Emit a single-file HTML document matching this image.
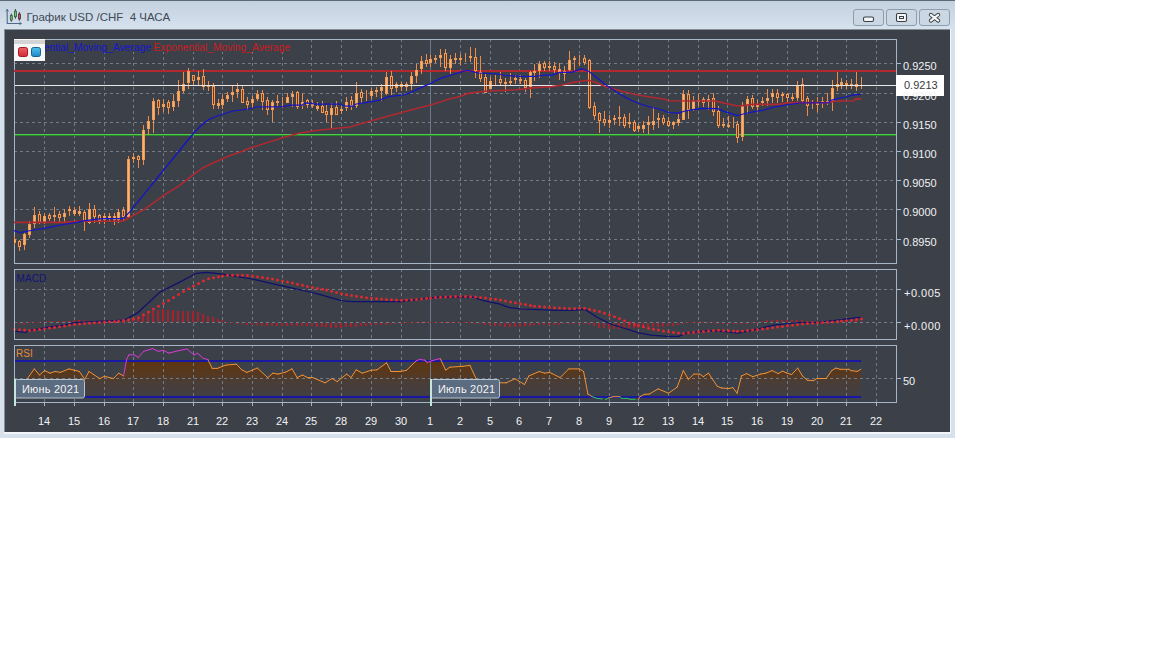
<!DOCTYPE html>
<html><head><meta charset="utf-8"><style>
*{margin:0;padding:0;box-sizing:border-box}
html,body{width:1152px;height:648px;overflow:hidden;background:#fff;font-family:"Liberation Sans",sans-serif}
#win{position:absolute;left:0;top:0;width:955px;height:438px;background:#d6e1ec}
#topline{position:absolute;left:0;top:0;width:955px;height:1px;background:#5f6973}
#title{position:absolute;left:0;top:1px;width:955px;height:28px;background:linear-gradient(#c4d1de,#d6e2ee)}
#shadow{position:absolute;left:4px;top:29px;width:947px;height:405px;background:#f2f6fa}
#shadow2{position:absolute;left:4px;top:29px;width:946px;height:403px;background:#868d94}
#frame{position:absolute;left:5px;top:30px;width:945px;height:402px;background:#3b4049}
#ttl{position:absolute;left:26.5px;top:11px;font-size:11.5px;color:#3e4a58;white-space:pre;line-height:13px}
svg{position:absolute;left:0;top:0}
.pl{position:absolute;left:903px;font-size:11px;color:#f2f2f2;line-height:13px;white-space:pre}
.tl{position:absolute;top:415px;width:40px;text-align:center;font-size:11px;color:#f2f2f2;line-height:13px}
.lg{position:absolute;top:42px;font-size:10px;line-height:12px;white-space:pre}
.cb{position:absolute;top:383px;font-size:11px;line-height:13px;color:#f4f4f4;white-space:pre;letter-spacing:0.2px}
</style></head><body>
<div id="win"><div id="topline"></div><div id="title"></div><div id="shadow"></div><div id="shadow2"></div><div id="frame"></div></div>
<div id="ttl">График USD /CHF  4 ЧАСА</div>
<svg style="left:5px;top:8px" width="18" height="18" viewBox="0 0 18 18" shape-rendering="geometricPrecision">
<path d="M2.2 1.8V15.5H16" fill="none" stroke="#4e6a88" stroke-width="1.1"/>
<path d="M0.9 3.4L2.2 1.2L3.5 3.4M14.4 14.2L16.6 15.5L14.4 16.8" fill="none" stroke="#4e6a88" stroke-width="0.9"/>
<path d="M6.3 5.6V13.8M10.4 1V10.8M14.4 4V12.8" stroke="#333" stroke-width="0.9"/>
<rect x="5.3" y="7.6" width="2" height="4.4" fill="#78c078" stroke="#2a5a30" stroke-width="0.8"/>
<rect x="9.4" y="3.1" width="2" height="5.6" fill="#78c078" stroke="#2a5a30" stroke-width="0.8"/>
<rect x="13.4" y="6.1" width="2" height="4.8" fill="#b06070" stroke="#5a2030" stroke-width="0.8"/>
</svg>
<svg style="left:850px;top:6px" width="104" height="24" viewBox="850 6 104 24" shape-rendering="geometricPrecision">
<rect x="853.5" y="9.5" width="30" height="16" rx="2.5" fill="#cbd8e4" stroke="#8e9cab"/>
<rect x="886.5" y="9.5" width="30" height="16" rx="2.5" fill="#cbd8e4" stroke="#8e9cab"/>
<rect x="919.5" y="9.5" width="30" height="16" rx="2.5" fill="#cbd8e4" stroke="#8e9cab"/>
<rect x="863.5" y="17" width="10" height="4.5" rx="1.5" fill="#f4f6f8" stroke="#3a3f46" stroke-width="1.1"/>
<rect x="896.5" y="13.5" width="10" height="8" rx="1.2" fill="#f4f6f8" stroke="#3a3f46" stroke-width="1.1"/>
<rect x="899.5" y="16.5" width="4" height="2" fill="none" stroke="#3a3f46" stroke-width="1"/>
<path d="M930.8 14.8L938.2 20.6M938.2 14.8L930.8 20.6" stroke="#3a3f46" stroke-width="4" stroke-linecap="round"/>
<path d="M930.8 14.8L938.2 20.6M938.2 14.8L930.8 20.6" stroke="#f4f6f8" stroke-width="2.1" stroke-linecap="round"/>
</svg>
<svg width="1152" height="648" viewBox="0 0 1152 648" shape-rendering="crispEdges">
<defs>
<linearGradient id="rsig" gradientUnits="userSpaceOnUse" x1="0" y1="361" x2="0" y2="398">
<stop offset="0" stop-color="#5c3510"/><stop offset="0.4" stop-color="#553923"/><stop offset="0.55" stop-color="#4a3d36"/><stop offset="1" stop-color="#403f45"/></linearGradient>
<clipPath id="rsiIn"><rect x="14" y="361" width="882" height="36"/></clipPath>
<clipPath id="rsiHi"><rect x="14" y="340" width="882" height="21"/></clipPath>
<clipPath id="rsiLo"><rect x="14" y="397" width="882" height="10"/></clipPath>
<clipPath id="mainc"><rect x="14" y="40" width="882" height="223"/></clipPath>
</defs><polygon points="27.4,397.0 27.4,378.5 34.3,368.9 39.5,375.0 44.7,370.6 49.9,373.2 55.1,371.5 60.3,372.4 69.0,368.9 79.4,371.5 84.7,379.3 89.0,371.5 99.8,378.6 104.3,376.3 113.3,378.6 118.6,373.2 123.6,375.9 126.7,361.0 128.9,361.0 133.9,361.0 138.3,361.0 143.7,361.0 152.7,361.0 158.0,361.0 163.4,361.0 168.8,361.0 178.4,361.0 187.0,361.0 194.0,361.0 197.5,361.0 203.5,361.0 207.8,361.0 212.2,368.4 217.4,368.4 222.6,366.3 226.0,365.1 236.5,364.2 241.7,369.8 246.9,372.4 257.3,368.0 267.7,377.6 272.9,373.2 278.0,374.1 285.0,372.4 292.0,368.9 297.2,377.6 302.4,375.0 307.6,377.6 312.8,377.6 325.0,382.8 332.0,378.5 337.2,381.6 346.7,374.1 351.0,377.6 356.2,369.8 362.3,373.2 371.0,370.3 377.0,369.8 386.6,362.8 391.0,371.5 400.4,371.5 406.5,370.3 416.0,361.1 419.5,361.0 424.7,361.0 427.3,362.5 431.7,361.0 436.9,361.0 440.3,361.0 445.6,370.1 449.9,367.2 462.9,366.3 469.9,365.4 476.0,378.5 478.0,382.0 499.4,382.8 506.3,382.8 515.0,378.8 524.5,384.5 528.9,375.9 539.3,371.5 544.5,373.2 549.7,372.4 560.1,377.6 568.8,368.9 579.2,368.9 583.6,371.5 587.9,394.0 592.2,396.7 597.4,397.0 606.0,397.0 608.6,397.0 613.0,396.7 620.0,396.7 621.7,397.0 626.9,397.0 630.3,397.0 638.2,397.0 639.9,396.7 644.2,394.4 649.4,394.0 658.1,388.9 668.5,393.2 677.2,387.1 683.3,370.6 688.5,379.3 693.7,374.1 699.8,374.1 703.3,376.7 708.5,373.2 717.2,386.3 721.5,388.0 729.3,388.5 732.8,387.5 737.1,393.2 741.5,375.9 746.7,373.6 752.7,376.7 760.6,374.1 765.8,373.2 772.2,370.6 778.2,373.6 782.5,371.2 786.7,373.0 791.6,374.6 797.7,368.1 802.5,376.0 807.4,380.3 813.5,380.6 817.1,378.5 826.2,378.5 831.7,370.6 835.9,368.1 840.2,369.3 848.7,369.3 851.1,370.6 857.2,371.4 860.9,369.3 860.9,397.0" fill="url(#rsig)" shape-rendering="geometricPrecision"/><line x1="14" y1="63.5" x2="896" y2="63.5" stroke="#737b86" stroke-width="1" stroke-dasharray="3 3"/><line x1="14" y1="93.5" x2="896" y2="93.5" stroke="#737b86" stroke-width="1" stroke-dasharray="3 3"/><line x1="14" y1="122.5" x2="896" y2="122.5" stroke="#737b86" stroke-width="1" stroke-dasharray="3 3"/><line x1="14" y1="151.5" x2="896" y2="151.5" stroke="#737b86" stroke-width="1" stroke-dasharray="3 3"/><line x1="14" y1="180.5" x2="896" y2="180.5" stroke="#737b86" stroke-width="1" stroke-dasharray="3 3"/><line x1="14" y1="209.5" x2="896" y2="209.5" stroke="#737b86" stroke-width="1" stroke-dasharray="3 3"/><line x1="14" y1="239.5" x2="896" y2="239.5" stroke="#737b86" stroke-width="1" stroke-dasharray="3 3"/><line x1="14" y1="289.5" x2="896" y2="289.5" stroke="#737b86" stroke-width="1" stroke-dasharray="3 3"/><line x1="14" y1="322.5" x2="896" y2="322.5" stroke="#737b86" stroke-width="1" stroke-dasharray="3 3"/><line x1="14" y1="378.5" x2="896" y2="378.5" stroke="#737b86" stroke-width="1" stroke-dasharray="3 3"/><line x1="44.5" y1="39" x2="44.5" y2="263" stroke="#737b86" stroke-width="1" stroke-dasharray="3 3"/><line x1="44.5" y1="269" x2="44.5" y2="339" stroke="#737b86" stroke-width="1" stroke-dasharray="3 3"/><line x1="44.5" y1="345" x2="44.5" y2="402" stroke="#737b86" stroke-width="1" stroke-dasharray="3 3"/><line x1="74.5" y1="39" x2="74.5" y2="263" stroke="#737b86" stroke-width="1" stroke-dasharray="3 3"/><line x1="74.5" y1="269" x2="74.5" y2="339" stroke="#737b86" stroke-width="1" stroke-dasharray="3 3"/><line x1="74.5" y1="345" x2="74.5" y2="402" stroke="#737b86" stroke-width="1" stroke-dasharray="3 3"/><line x1="104.5" y1="39" x2="104.5" y2="263" stroke="#737b86" stroke-width="1" stroke-dasharray="3 3"/><line x1="104.5" y1="269" x2="104.5" y2="339" stroke="#737b86" stroke-width="1" stroke-dasharray="3 3"/><line x1="104.5" y1="345" x2="104.5" y2="402" stroke="#737b86" stroke-width="1" stroke-dasharray="3 3"/><line x1="133.5" y1="39" x2="133.5" y2="263" stroke="#737b86" stroke-width="1" stroke-dasharray="3 3"/><line x1="133.5" y1="269" x2="133.5" y2="339" stroke="#737b86" stroke-width="1" stroke-dasharray="3 3"/><line x1="133.5" y1="345" x2="133.5" y2="402" stroke="#737b86" stroke-width="1" stroke-dasharray="3 3"/><line x1="163.5" y1="39" x2="163.5" y2="263" stroke="#737b86" stroke-width="1" stroke-dasharray="3 3"/><line x1="163.5" y1="269" x2="163.5" y2="339" stroke="#737b86" stroke-width="1" stroke-dasharray="3 3"/><line x1="163.5" y1="345" x2="163.5" y2="402" stroke="#737b86" stroke-width="1" stroke-dasharray="3 3"/><line x1="193.5" y1="39" x2="193.5" y2="263" stroke="#737b86" stroke-width="1" stroke-dasharray="3 3"/><line x1="193.5" y1="269" x2="193.5" y2="339" stroke="#737b86" stroke-width="1" stroke-dasharray="3 3"/><line x1="193.5" y1="345" x2="193.5" y2="402" stroke="#737b86" stroke-width="1" stroke-dasharray="3 3"/><line x1="222.5" y1="39" x2="222.5" y2="263" stroke="#737b86" stroke-width="1" stroke-dasharray="3 3"/><line x1="222.5" y1="269" x2="222.5" y2="339" stroke="#737b86" stroke-width="1" stroke-dasharray="3 3"/><line x1="222.5" y1="345" x2="222.5" y2="402" stroke="#737b86" stroke-width="1" stroke-dasharray="3 3"/><line x1="252.5" y1="39" x2="252.5" y2="263" stroke="#737b86" stroke-width="1" stroke-dasharray="3 3"/><line x1="252.5" y1="269" x2="252.5" y2="339" stroke="#737b86" stroke-width="1" stroke-dasharray="3 3"/><line x1="252.5" y1="345" x2="252.5" y2="402" stroke="#737b86" stroke-width="1" stroke-dasharray="3 3"/><line x1="282.5" y1="39" x2="282.5" y2="263" stroke="#737b86" stroke-width="1" stroke-dasharray="3 3"/><line x1="282.5" y1="269" x2="282.5" y2="339" stroke="#737b86" stroke-width="1" stroke-dasharray="3 3"/><line x1="282.5" y1="345" x2="282.5" y2="402" stroke="#737b86" stroke-width="1" stroke-dasharray="3 3"/><line x1="311.5" y1="39" x2="311.5" y2="263" stroke="#737b86" stroke-width="1" stroke-dasharray="3 3"/><line x1="311.5" y1="269" x2="311.5" y2="339" stroke="#737b86" stroke-width="1" stroke-dasharray="3 3"/><line x1="311.5" y1="345" x2="311.5" y2="402" stroke="#737b86" stroke-width="1" stroke-dasharray="3 3"/><line x1="341.5" y1="39" x2="341.5" y2="263" stroke="#737b86" stroke-width="1" stroke-dasharray="3 3"/><line x1="341.5" y1="269" x2="341.5" y2="339" stroke="#737b86" stroke-width="1" stroke-dasharray="3 3"/><line x1="341.5" y1="345" x2="341.5" y2="402" stroke="#737b86" stroke-width="1" stroke-dasharray="3 3"/><line x1="371.5" y1="39" x2="371.5" y2="263" stroke="#737b86" stroke-width="1" stroke-dasharray="3 3"/><line x1="371.5" y1="269" x2="371.5" y2="339" stroke="#737b86" stroke-width="1" stroke-dasharray="3 3"/><line x1="371.5" y1="345" x2="371.5" y2="402" stroke="#737b86" stroke-width="1" stroke-dasharray="3 3"/><line x1="401.5" y1="39" x2="401.5" y2="263" stroke="#737b86" stroke-width="1" stroke-dasharray="3 3"/><line x1="401.5" y1="269" x2="401.5" y2="339" stroke="#737b86" stroke-width="1" stroke-dasharray="3 3"/><line x1="401.5" y1="345" x2="401.5" y2="402" stroke="#737b86" stroke-width="1" stroke-dasharray="3 3"/><line x1="460.5" y1="39" x2="460.5" y2="263" stroke="#737b86" stroke-width="1" stroke-dasharray="3 3"/><line x1="460.5" y1="269" x2="460.5" y2="339" stroke="#737b86" stroke-width="1" stroke-dasharray="3 3"/><line x1="460.5" y1="345" x2="460.5" y2="402" stroke="#737b86" stroke-width="1" stroke-dasharray="3 3"/><line x1="490.5" y1="39" x2="490.5" y2="263" stroke="#737b86" stroke-width="1" stroke-dasharray="3 3"/><line x1="490.5" y1="269" x2="490.5" y2="339" stroke="#737b86" stroke-width="1" stroke-dasharray="3 3"/><line x1="490.5" y1="345" x2="490.5" y2="402" stroke="#737b86" stroke-width="1" stroke-dasharray="3 3"/><line x1="519.5" y1="39" x2="519.5" y2="263" stroke="#737b86" stroke-width="1" stroke-dasharray="3 3"/><line x1="519.5" y1="269" x2="519.5" y2="339" stroke="#737b86" stroke-width="1" stroke-dasharray="3 3"/><line x1="519.5" y1="345" x2="519.5" y2="402" stroke="#737b86" stroke-width="1" stroke-dasharray="3 3"/><line x1="549.5" y1="39" x2="549.5" y2="263" stroke="#737b86" stroke-width="1" stroke-dasharray="3 3"/><line x1="549.5" y1="269" x2="549.5" y2="339" stroke="#737b86" stroke-width="1" stroke-dasharray="3 3"/><line x1="549.5" y1="345" x2="549.5" y2="402" stroke="#737b86" stroke-width="1" stroke-dasharray="3 3"/><line x1="579.5" y1="39" x2="579.5" y2="263" stroke="#737b86" stroke-width="1" stroke-dasharray="3 3"/><line x1="579.5" y1="269" x2="579.5" y2="339" stroke="#737b86" stroke-width="1" stroke-dasharray="3 3"/><line x1="579.5" y1="345" x2="579.5" y2="402" stroke="#737b86" stroke-width="1" stroke-dasharray="3 3"/><line x1="609.5" y1="39" x2="609.5" y2="263" stroke="#737b86" stroke-width="1" stroke-dasharray="3 3"/><line x1="609.5" y1="269" x2="609.5" y2="339" stroke="#737b86" stroke-width="1" stroke-dasharray="3 3"/><line x1="609.5" y1="345" x2="609.5" y2="402" stroke="#737b86" stroke-width="1" stroke-dasharray="3 3"/><line x1="638.5" y1="39" x2="638.5" y2="263" stroke="#737b86" stroke-width="1" stroke-dasharray="3 3"/><line x1="638.5" y1="269" x2="638.5" y2="339" stroke="#737b86" stroke-width="1" stroke-dasharray="3 3"/><line x1="638.5" y1="345" x2="638.5" y2="402" stroke="#737b86" stroke-width="1" stroke-dasharray="3 3"/><line x1="668.5" y1="39" x2="668.5" y2="263" stroke="#737b86" stroke-width="1" stroke-dasharray="3 3"/><line x1="668.5" y1="269" x2="668.5" y2="339" stroke="#737b86" stroke-width="1" stroke-dasharray="3 3"/><line x1="668.5" y1="345" x2="668.5" y2="402" stroke="#737b86" stroke-width="1" stroke-dasharray="3 3"/><line x1="698.5" y1="39" x2="698.5" y2="263" stroke="#737b86" stroke-width="1" stroke-dasharray="3 3"/><line x1="698.5" y1="269" x2="698.5" y2="339" stroke="#737b86" stroke-width="1" stroke-dasharray="3 3"/><line x1="698.5" y1="345" x2="698.5" y2="402" stroke="#737b86" stroke-width="1" stroke-dasharray="3 3"/><line x1="727.5" y1="39" x2="727.5" y2="263" stroke="#737b86" stroke-width="1" stroke-dasharray="3 3"/><line x1="727.5" y1="269" x2="727.5" y2="339" stroke="#737b86" stroke-width="1" stroke-dasharray="3 3"/><line x1="727.5" y1="345" x2="727.5" y2="402" stroke="#737b86" stroke-width="1" stroke-dasharray="3 3"/><line x1="757.5" y1="39" x2="757.5" y2="263" stroke="#737b86" stroke-width="1" stroke-dasharray="3 3"/><line x1="757.5" y1="269" x2="757.5" y2="339" stroke="#737b86" stroke-width="1" stroke-dasharray="3 3"/><line x1="757.5" y1="345" x2="757.5" y2="402" stroke="#737b86" stroke-width="1" stroke-dasharray="3 3"/><line x1="787.5" y1="39" x2="787.5" y2="263" stroke="#737b86" stroke-width="1" stroke-dasharray="3 3"/><line x1="787.5" y1="269" x2="787.5" y2="339" stroke="#737b86" stroke-width="1" stroke-dasharray="3 3"/><line x1="787.5" y1="345" x2="787.5" y2="402" stroke="#737b86" stroke-width="1" stroke-dasharray="3 3"/><line x1="817.5" y1="39" x2="817.5" y2="263" stroke="#737b86" stroke-width="1" stroke-dasharray="3 3"/><line x1="817.5" y1="269" x2="817.5" y2="339" stroke="#737b86" stroke-width="1" stroke-dasharray="3 3"/><line x1="817.5" y1="345" x2="817.5" y2="402" stroke="#737b86" stroke-width="1" stroke-dasharray="3 3"/><line x1="846.5" y1="39" x2="846.5" y2="263" stroke="#737b86" stroke-width="1" stroke-dasharray="3 3"/><line x1="846.5" y1="269" x2="846.5" y2="339" stroke="#737b86" stroke-width="1" stroke-dasharray="3 3"/><line x1="846.5" y1="345" x2="846.5" y2="402" stroke="#737b86" stroke-width="1" stroke-dasharray="3 3"/><line x1="876.5" y1="39" x2="876.5" y2="263" stroke="#737b86" stroke-width="1" stroke-dasharray="3 3"/><line x1="876.5" y1="269" x2="876.5" y2="339" stroke="#737b86" stroke-width="1" stroke-dasharray="3 3"/><line x1="876.5" y1="345" x2="876.5" y2="402" stroke="#737b86" stroke-width="1" stroke-dasharray="3 3"/><line x1="430.5" y1="40" x2="430.5" y2="402" stroke="#6b7889" stroke-width="1"/><rect x="15" y="360" width="846" height="2" fill="#1818a4"/><rect x="15" y="396" width="846" height="2" fill="#1818a4"/><g fill="none" stroke-width="1" shape-rendering="geometricPrecision" stroke-linecap="round"><path d="M27.4 378.5L34.3 368.9M34.3 368.9L39.5 375.0M39.5 375.0L44.7 370.6M44.7 370.6L49.9 373.2M49.9 373.2L55.1 371.5M55.1 371.5L60.3 372.4M60.3 372.4L69.0 368.9M69.0 368.9L79.4 371.5M79.4 371.5L84.7 379.3M84.7 379.3L89.0 371.5M89.0 371.5L99.8 378.6M99.8 378.6L104.3 376.3M104.3 376.3L113.3 378.6M113.3 378.6L118.6 373.2M118.6 373.2L123.6 375.9M207.8 359.4L212.2 368.4M212.2 368.4L217.4 368.4M217.4 368.4L222.6 366.3M222.6 366.3L226.0 365.1M226.0 365.1L236.5 364.2M236.5 364.2L241.7 369.8M241.7 369.8L246.9 372.4M246.9 372.4L257.3 368.0M257.3 368.0L267.7 377.6M267.7 377.6L272.9 373.2M272.9 373.2L278.0 374.1M278.0 374.1L285.0 372.4M285.0 372.4L292.0 368.9M292.0 368.9L297.2 377.6M297.2 377.6L302.4 375.0M302.4 375.0L307.6 377.6M307.6 377.6L312.8 377.6M312.8 377.6L325.0 382.8M325.0 382.8L332.0 378.5M332.0 378.5L337.2 381.6M337.2 381.6L346.7 374.1M346.7 374.1L351.0 377.6M351.0 377.6L356.2 369.8M356.2 369.8L362.3 373.2M362.3 373.2L371.0 370.3M371.0 370.3L377.0 369.8M377.0 369.8L386.6 362.8M386.6 362.8L391.0 371.5M391.0 371.5L400.4 371.5M400.4 371.5L406.5 370.3M406.5 370.3L416.0 361.1M424.7 360.2L427.3 362.5M440.3 358.5L445.6 370.1M445.6 370.1L449.9 367.2M449.9 367.2L462.9 366.3M462.9 366.3L469.9 365.4M469.9 365.4L476.0 378.5M476.0 378.5L478.0 382.0M478.0 382.0L499.4 382.8M499.4 382.8L506.3 382.8M506.3 382.8L515.0 378.8M515.0 378.8L524.5 384.5M524.5 384.5L528.9 375.9M528.9 375.9L539.3 371.5M539.3 371.5L544.5 373.2M544.5 373.2L549.7 372.4M549.7 372.4L560.1 377.6M560.1 377.6L568.8 368.9M568.8 368.9L579.2 368.9M579.2 368.9L583.6 371.5M583.6 371.5L587.9 394.0M587.9 394.0L592.2 396.7M608.6 398.0L613.0 396.7M613.0 396.7L620.0 396.7M638.2 399.3L639.9 396.7M639.9 396.7L644.2 394.4M644.2 394.4L649.4 394.0M649.4 394.0L658.1 388.9M658.1 388.9L668.5 393.2M668.5 393.2L677.2 387.1M677.2 387.1L683.3 370.6M683.3 370.6L688.5 379.3M688.5 379.3L693.7 374.1M693.7 374.1L699.8 374.1M699.8 374.1L703.3 376.7M703.3 376.7L708.5 373.2M708.5 373.2L717.2 386.3M717.2 386.3L721.5 388.0M721.5 388.0L729.3 388.5M729.3 388.5L732.8 387.5M732.8 387.5L737.1 393.2M737.1 393.2L741.5 375.9M741.5 375.9L746.7 373.6M746.7 373.6L752.7 376.7M752.7 376.7L760.6 374.1M760.6 374.1L765.8 373.2M765.8 373.2L772.2 370.6M772.2 370.6L778.2 373.6M778.2 373.6L782.5 371.2M782.5 371.2L786.7 373.0M786.7 373.0L791.6 374.6M791.6 374.6L797.7 368.1M797.7 368.1L802.5 376.0M802.5 376.0L807.4 380.3M807.4 380.3L813.5 380.6M813.5 380.6L817.1 378.5M817.1 378.5L826.2 378.5M826.2 378.5L831.7 370.6M831.7 370.6L835.9 368.1M835.9 368.1L840.2 369.3M840.2 369.3L848.7 369.3M848.7 369.3L851.1 370.6M851.1 370.6L857.2 371.4M857.2 371.4L860.9 369.3" stroke="#f09236"/><path d="M123.6 375.9L126.7 359.3M126.7 359.3L128.9 354.8M128.9 354.8L133.9 354.8M133.9 354.8L138.3 357.5M138.3 357.5L143.7 351.3M143.7 351.3L152.7 348.6M152.7 348.6L158.0 351.3M158.0 351.3L163.4 350.4M163.4 350.4L168.8 353.1M168.8 353.1L178.4 350.7M178.4 350.7L187.0 348.9M187.0 348.9L194.0 355.0M194.0 355.0L197.5 353.3M197.5 353.3L203.5 358.5M203.5 358.5L207.8 359.4M416.0 361.1L419.5 359.4M419.5 359.4L424.7 360.2M427.3 362.5L431.7 360.8M431.7 360.8L436.9 359.4M436.9 359.4L440.3 358.5" stroke="#d83ad8"/><path d="M592.2 396.7L597.4 398.4M597.4 398.4L606.0 399.3M606.0 399.3L608.6 398.0M620.0 396.7L621.7 398.4M621.7 398.4L626.9 398.4M626.9 398.4L630.3 399.3M630.3 399.3L638.2 399.3" stroke="#30c060" stroke-dasharray="5 3"/></g><g fill="#a8222e"><rect x="13" y="323" width="2" height="1"/><rect x="18" y="323" width="2" height="1"/><rect x="23" y="323" width="2" height="2"/><rect x="28" y="322" width="2" height="1"/><rect x="33" y="322" width="2" height="1"/><rect x="38" y="322" width="2" height="1"/><rect x="43" y="321" width="2" height="1"/><rect x="48" y="321" width="2" height="1"/><rect x="53" y="321" width="2" height="1"/><rect x="58" y="321" width="2" height="1"/><rect x="63" y="321" width="2" height="1"/><rect x="68" y="321" width="2" height="1"/><rect x="73" y="320" width="2" height="2"/><rect x="78" y="320" width="2" height="2"/><rect x="83" y="320" width="2" height="2"/><rect x="88" y="321" width="2" height="1"/><rect x="93" y="321" width="2" height="1"/><rect x="98" y="321" width="2" height="1"/><rect x="103" y="321" width="2" height="1"/><rect x="108" y="321" width="2" height="1"/><rect x="113" y="321" width="2" height="1"/><rect x="117" y="321" width="2" height="1"/><rect x="122" y="322" width="2" height="1"/><rect x="127" y="320" width="2" height="2"/><rect x="132" y="319" width="2" height="3"/><rect x="137" y="317" width="2" height="5"/><rect x="142" y="315" width="2" height="7"/><rect x="147" y="313" width="2" height="9"/><rect x="152" y="311" width="2" height="11"/><rect x="157" y="310" width="2" height="12"/><rect x="162" y="309" width="2" height="13"/><rect x="167" y="310" width="2" height="12"/><rect x="172" y="310" width="2" height="12"/><rect x="177" y="311" width="2" height="11"/><rect x="182" y="311" width="2" height="11"/><rect x="187" y="311" width="2" height="11"/><rect x="192" y="311" width="2" height="11"/><rect x="197" y="312" width="2" height="10"/><rect x="202" y="314" width="2" height="8"/><rect x="207" y="316" width="2" height="6"/><rect x="212" y="317" width="2" height="5"/><rect x="217" y="319" width="2" height="3"/><rect x="221" y="320" width="2" height="2"/><rect x="226" y="322" width="2" height="1"/><rect x="231" y="322" width="2" height="1"/><rect x="236" y="323" width="2" height="1"/><rect x="241" y="323" width="2" height="1"/><rect x="246" y="323" width="2" height="2"/><rect x="251" y="323" width="2" height="2"/><rect x="256" y="323" width="2" height="2"/><rect x="261" y="323" width="2" height="3"/><rect x="266" y="323" width="2" height="3"/><rect x="271" y="323" width="2" height="3"/><rect x="276" y="323" width="2" height="3"/><rect x="281" y="323" width="2" height="3"/><rect x="286" y="323" width="2" height="3"/><rect x="291" y="323" width="2" height="3"/><rect x="296" y="323" width="2" height="3"/><rect x="301" y="323" width="2" height="3"/><rect x="306" y="323" width="2" height="3"/><rect x="311" y="323" width="2" height="3"/><rect x="316" y="323" width="2" height="4"/><rect x="321" y="323" width="2" height="4"/><rect x="325" y="323" width="2" height="4"/><rect x="330" y="323" width="2" height="5"/><rect x="335" y="323" width="2" height="5"/><rect x="340" y="323" width="2" height="5"/><rect x="345" y="323" width="2" height="4"/><rect x="350" y="323" width="2" height="4"/><rect x="355" y="323" width="2" height="4"/><rect x="360" y="323" width="2" height="3"/><rect x="365" y="323" width="2" height="3"/><rect x="370" y="323" width="2" height="2"/><rect x="375" y="323" width="2" height="2"/><rect x="380" y="323" width="2" height="2"/><rect x="385" y="323" width="2" height="2"/><rect x="390" y="323" width="2" height="1"/><rect x="395" y="323" width="2" height="1"/><rect x="400" y="323" width="2" height="1"/><rect x="405" y="322" width="2" height="1"/><rect x="410" y="322" width="2" height="1"/><rect x="415" y="322" width="2" height="1"/><rect x="420" y="322" width="2" height="1"/><rect x="425" y="322" width="2" height="1"/><rect x="429" y="322" width="2" height="1"/><rect x="434" y="322" width="2" height="1"/><rect x="439" y="322" width="2" height="1"/><rect x="444" y="322" width="2" height="1"/><rect x="449" y="322" width="2" height="1"/><rect x="454" y="322" width="2" height="1"/><rect x="459" y="322" width="2" height="1"/><rect x="464" y="322" width="2" height="1"/><rect x="469" y="322" width="2" height="1"/><rect x="474" y="323" width="2" height="1"/><rect x="479" y="323" width="2" height="1"/><rect x="484" y="323" width="2" height="2"/><rect x="489" y="323" width="2" height="2"/><rect x="494" y="323" width="2" height="3"/><rect x="499" y="323" width="2" height="3"/><rect x="504" y="323" width="2" height="4"/><rect x="509" y="323" width="2" height="4"/><rect x="514" y="323" width="2" height="4"/><rect x="519" y="323" width="2" height="4"/><rect x="524" y="323" width="2" height="3"/><rect x="529" y="323" width="2" height="3"/><rect x="533" y="323" width="2" height="2"/><rect x="538" y="323" width="2" height="2"/><rect x="543" y="323" width="2" height="2"/><rect x="548" y="323" width="2" height="2"/><rect x="553" y="323" width="2" height="2"/><rect x="558" y="323" width="2" height="2"/><rect x="563" y="323" width="2" height="1"/><rect x="568" y="323" width="2" height="1"/><rect x="573" y="323" width="2" height="1"/><rect x="578" y="323" width="2" height="1"/><rect x="583" y="323" width="2" height="1"/><rect x="588" y="323" width="2" height="2"/><rect x="593" y="323" width="2" height="3"/><rect x="598" y="323" width="2" height="5"/><rect x="603" y="323" width="2" height="5"/><rect x="608" y="323" width="2" height="6"/><rect x="613" y="323" width="2" height="6"/><rect x="618" y="323" width="2" height="6"/><rect x="623" y="323" width="2" height="5"/><rect x="628" y="323" width="2" height="5"/><rect x="633" y="323" width="2" height="5"/><rect x="637" y="323" width="2" height="5"/><rect x="642" y="323" width="2" height="5"/><rect x="647" y="323" width="2" height="4"/><rect x="652" y="323" width="2" height="4"/><rect x="657" y="323" width="2" height="4"/><rect x="662" y="323" width="2" height="4"/><rect x="667" y="323" width="2" height="3"/><rect x="672" y="323" width="2" height="3"/><rect x="677" y="323" width="2" height="2"/><rect x="682" y="323" width="2" height="1"/><rect x="687" y="322" width="2" height="1"/><rect x="692" y="322" width="2" height="1"/><rect x="697" y="322" width="2" height="1"/><rect x="702" y="322" width="2" height="1"/><rect x="707" y="322" width="2" height="1"/><rect x="712" y="322" width="2" height="1"/><rect x="717" y="323" width="2" height="1"/><rect x="722" y="323" width="2" height="1"/><rect x="727" y="323" width="2" height="1"/><rect x="732" y="323" width="2" height="1"/><rect x="736" y="323" width="2" height="1"/><rect x="741" y="323" width="2" height="1"/><rect x="746" y="323" width="2" height="1"/><rect x="751" y="322" width="2" height="1"/><rect x="756" y="322" width="2" height="1"/><rect x="761" y="321" width="2" height="1"/><rect x="766" y="320" width="2" height="2"/><rect x="771" y="320" width="2" height="2"/><rect x="776" y="320" width="2" height="2"/><rect x="781" y="320" width="2" height="2"/><rect x="786" y="320" width="2" height="2"/><rect x="791" y="320" width="2" height="2"/><rect x="796" y="320" width="2" height="2"/><rect x="801" y="320" width="2" height="2"/><rect x="806" y="321" width="2" height="1"/><rect x="811" y="321" width="2" height="1"/><rect x="816" y="322" width="2" height="1"/><rect x="821" y="322" width="2" height="1"/><rect x="826" y="321" width="2" height="1"/><rect x="831" y="321" width="2" height="1"/><rect x="836" y="321" width="2" height="1"/><rect x="840" y="320" width="2" height="2"/><rect x="845" y="320" width="2" height="2"/><rect x="850" y="320" width="2" height="2"/><rect x="855" y="320" width="2" height="2"/><rect x="860" y="321" width="2" height="1"/></g><polyline points="14.6,331.1 25.6,332.5 29.5,330.5 49.0,327.2 64.7,325.2 75.0,322.6 124.6,320.0 137.5,312.9 160.0,292.0 177.3,283.4 196.4,273.3 206.8,272.4 224.0,274.3 252.0,279.0 271.0,283.4 286.7,286.8 310.0,292.0 320.4,294.6 341.3,300.7 351.7,301.6 400.3,301.6 421.0,299.0 438.5,297.2 473.2,297.2 483.6,300.7 500.0,304.2 508.7,307.3 520.8,309.0 557.3,310.3 571.2,310.3 585.0,309.4 597.2,317.2 611.1,324.2 625.0,328.5 638.9,332.8 651.0,335.1 666.7,336.3 678.8,336.3 687.5,332.8 690.0,332.5 708.2,330.7 726.5,331.6 737.4,333.1 750.2,330.7 773.9,325.2 799.4,322.5 817.6,322.5 839.5,319.8 857.7,317.6 862.3,317.6" fill="none" stroke="#10106e" stroke-width="1.2" shape-rendering="geometricPrecision"/><g fill="#e02830" shape-rendering="geometricPrecision"><circle cx="14.5" cy="329.5" r="1.5"/><circle cx="19.5" cy="329.8" r="1.5"/><circle cx="24.5" cy="330.1" r="1.5"/><circle cx="29.5" cy="330.4" r="1.5"/><circle cx="34.5" cy="330.0" r="1.5"/><circle cx="39.5" cy="329.4" r="1.5"/><circle cx="44.5" cy="328.8" r="1.5"/><circle cx="49.5" cy="328.1" r="1.5"/><circle cx="54.5" cy="327.4" r="1.5"/><circle cx="59.5" cy="326.7" r="1.5"/><circle cx="64.5" cy="326.0" r="1.5"/><circle cx="69.5" cy="325.3" r="1.5"/><circle cx="74.5" cy="324.6" r="1.5"/><circle cx="79.5" cy="324.1" r="1.5"/><circle cx="84.5" cy="323.6" r="1.5"/><circle cx="89.5" cy="323.2" r="1.5"/><circle cx="94.5" cy="322.7" r="1.5"/><circle cx="99.5" cy="322.4" r="1.5"/><circle cx="104.5" cy="322.1" r="1.5"/><circle cx="109.5" cy="321.8" r="1.5"/><circle cx="114.5" cy="321.5" r="1.5"/><circle cx="118.5" cy="321.3" r="1.5"/><circle cx="123.5" cy="320.6" r="1.5"/><circle cx="128.5" cy="319.7" r="1.5"/><circle cx="133.5" cy="318.8" r="1.5"/><circle cx="138.5" cy="317.7" r="1.5"/><circle cx="143.5" cy="314.8" r="1.5"/><circle cx="148.5" cy="311.9" r="1.5"/><circle cx="153.5" cy="309.1" r="1.5"/><circle cx="158.5" cy="306.3" r="1.5"/><circle cx="163.5" cy="303.5" r="1.5"/><circle cx="168.5" cy="300.5" r="1.5"/><circle cx="173.5" cy="297.5" r="1.5"/><circle cx="178.5" cy="294.4" r="1.5"/><circle cx="183.5" cy="291.6" r="1.5"/><circle cx="188.5" cy="288.8" r="1.5"/><circle cx="193.5" cy="286.0" r="1.5"/><circle cx="198.5" cy="283.4" r="1.5"/><circle cx="203.5" cy="280.9" r="1.5"/><circle cx="208.5" cy="278.7" r="1.5"/><circle cx="213.5" cy="277.7" r="1.5"/><circle cx="218.5" cy="276.7" r="1.5"/><circle cx="222.5" cy="276.1" r="1.5"/><circle cx="227.5" cy="275.3" r="1.5"/><circle cx="232.5" cy="275.2" r="1.5"/><circle cx="237.5" cy="275.2" r="1.5"/><circle cx="242.5" cy="275.2" r="1.5"/><circle cx="247.5" cy="275.6" r="1.5"/><circle cx="252.5" cy="276.0" r="1.5"/><circle cx="257.5" cy="276.7" r="1.5"/><circle cx="262.5" cy="277.4" r="1.5"/><circle cx="267.5" cy="278.2" r="1.5"/><circle cx="272.5" cy="278.9" r="1.5"/><circle cx="277.5" cy="279.9" r="1.5"/><circle cx="282.5" cy="280.9" r="1.5"/><circle cx="287.5" cy="282.0" r="1.5"/><circle cx="292.5" cy="283.1" r="1.5"/><circle cx="297.5" cy="284.2" r="1.5"/><circle cx="302.5" cy="285.3" r="1.5"/><circle cx="307.5" cy="286.5" r="1.5"/><circle cx="312.5" cy="287.6" r="1.5"/><circle cx="317.5" cy="288.4" r="1.5"/><circle cx="322.5" cy="289.3" r="1.5"/><circle cx="326.5" cy="290.1" r="1.5"/><circle cx="331.5" cy="291.2" r="1.5"/><circle cx="336.5" cy="292.4" r="1.5"/><circle cx="341.5" cy="293.7" r="1.5"/><circle cx="346.5" cy="294.8" r="1.5"/><circle cx="351.5" cy="295.6" r="1.5"/><circle cx="356.5" cy="296.3" r="1.5"/><circle cx="361.5" cy="297.1" r="1.5"/><circle cx="366.5" cy="297.7" r="1.5"/><circle cx="371.5" cy="298.2" r="1.5"/><circle cx="376.5" cy="298.7" r="1.5"/><circle cx="381.5" cy="299.1" r="1.5"/><circle cx="386.5" cy="299.4" r="1.5"/><circle cx="391.5" cy="299.7" r="1.5"/><circle cx="396.5" cy="300.0" r="1.5"/><circle cx="401.5" cy="300.3" r="1.5"/><circle cx="406.5" cy="300.1" r="1.5"/><circle cx="411.5" cy="299.8" r="1.5"/><circle cx="416.5" cy="299.4" r="1.5"/><circle cx="421.5" cy="299.0" r="1.5"/><circle cx="426.5" cy="298.5" r="1.5"/><circle cx="430.5" cy="298.1" r="1.5"/><circle cx="435.5" cy="297.6" r="1.5"/><circle cx="440.5" cy="297.2" r="1.5"/><circle cx="445.5" cy="296.9" r="1.5"/><circle cx="450.5" cy="296.7" r="1.5"/><circle cx="455.5" cy="296.4" r="1.5"/><circle cx="460.5" cy="296.5" r="1.5"/><circle cx="465.5" cy="296.6" r="1.5"/><circle cx="470.5" cy="296.8" r="1.5"/><circle cx="475.5" cy="296.9" r="1.5"/><circle cx="480.5" cy="297.5" r="1.5"/><circle cx="485.5" cy="298.1" r="1.5"/><circle cx="490.5" cy="298.7" r="1.5"/><circle cx="495.5" cy="299.3" r="1.5"/><circle cx="500.5" cy="299.9" r="1.5"/><circle cx="505.5" cy="300.9" r="1.5"/><circle cx="510.5" cy="301.9" r="1.5"/><circle cx="515.5" cy="302.8" r="1.5"/><circle cx="520.5" cy="303.8" r="1.5"/><circle cx="525.5" cy="304.6" r="1.5"/><circle cx="530.5" cy="305.5" r="1.5"/><circle cx="534.5" cy="306.2" r="1.5"/><circle cx="539.5" cy="306.6" r="1.5"/><circle cx="544.5" cy="307.1" r="1.5"/><circle cx="549.5" cy="307.5" r="1.5"/><circle cx="554.5" cy="307.8" r="1.5"/><circle cx="559.5" cy="308.0" r="1.5"/><circle cx="564.5" cy="308.3" r="1.5"/><circle cx="569.5" cy="308.5" r="1.5"/><circle cx="574.5" cy="308.4" r="1.5"/><circle cx="579.5" cy="308.3" r="1.5"/><circle cx="584.5" cy="308.2" r="1.5"/><circle cx="589.5" cy="309.2" r="1.5"/><circle cx="594.5" cy="310.4" r="1.5"/><circle cx="599.5" cy="311.6" r="1.5"/><circle cx="604.5" cy="313.2" r="1.5"/><circle cx="609.5" cy="314.9" r="1.5"/><circle cx="614.5" cy="316.7" r="1.5"/><circle cx="619.5" cy="318.6" r="1.5"/><circle cx="624.5" cy="320.8" r="1.5"/><circle cx="629.5" cy="323.0" r="1.5"/><circle cx="634.5" cy="324.4" r="1.5"/><circle cx="638.5" cy="325.5" r="1.5"/><circle cx="643.5" cy="326.8" r="1.5"/><circle cx="648.5" cy="328.2" r="1.5"/><circle cx="653.5" cy="329.2" r="1.5"/><circle cx="658.5" cy="330.1" r="1.5"/><circle cx="663.5" cy="330.9" r="1.5"/><circle cx="668.5" cy="331.8" r="1.5"/><circle cx="673.5" cy="332.4" r="1.5"/><circle cx="678.5" cy="333.1" r="1.5"/><circle cx="683.5" cy="333.6" r="1.5"/><circle cx="688.5" cy="332.8" r="1.5"/><circle cx="693.5" cy="332.2" r="1.5"/><circle cx="698.5" cy="331.8" r="1.5"/><circle cx="703.5" cy="331.4" r="1.5"/><circle cx="708.5" cy="331.0" r="1.5"/><circle cx="713.5" cy="330.6" r="1.5"/><circle cx="718.5" cy="330.2" r="1.5"/><circle cx="723.5" cy="330.5" r="1.5"/><circle cx="728.5" cy="330.8" r="1.5"/><circle cx="733.5" cy="331.1" r="1.5"/><circle cx="737.5" cy="331.3" r="1.5"/><circle cx="742.5" cy="330.9" r="1.5"/><circle cx="747.5" cy="330.4" r="1.5"/><circle cx="752.5" cy="329.9" r="1.5"/><circle cx="757.5" cy="329.5" r="1.5"/><circle cx="762.5" cy="329.0" r="1.5"/><circle cx="767.5" cy="328.4" r="1.5"/><circle cx="772.5" cy="327.7" r="1.5"/><circle cx="777.5" cy="327.1" r="1.5"/><circle cx="782.5" cy="326.4" r="1.5"/><circle cx="787.5" cy="325.8" r="1.5"/><circle cx="792.5" cy="325.2" r="1.5"/><circle cx="797.5" cy="324.7" r="1.5"/><circle cx="802.5" cy="324.1" r="1.5"/><circle cx="807.5" cy="323.6" r="1.5"/><circle cx="812.5" cy="323.2" r="1.5"/><circle cx="817.5" cy="322.8" r="1.5"/><circle cx="822.5" cy="322.5" r="1.5"/><circle cx="827.5" cy="322.2" r="1.5"/><circle cx="832.5" cy="321.9" r="1.5"/><circle cx="837.5" cy="321.5" r="1.5"/><circle cx="841.5" cy="321.1" r="1.5"/><circle cx="846.5" cy="320.7" r="1.5"/><circle cx="851.5" cy="320.2" r="1.5"/><circle cx="856.5" cy="319.5" r="1.5"/><circle cx="861.5" cy="318.7" r="1.5"/></g><path d="M14.5 263.5V39.5H896.5V263.5H14.5" fill="none" stroke="#a6b6c7" stroke-width="1"/><path d="M14.5 339.5V269.5H896.5V339.5H14.5" fill="none" stroke="#a6b6c7" stroke-width="1"/><path d="M14.5 402.5V345.5H896.5V402.5H14.5" fill="none" stroke="#a6b6c7" stroke-width="1"/><rect x="14" y="70" width="882" height="2" fill="#b5282e"/><rect x="15" y="134" width="881" height="1" fill="#55c455"/><rect x="15" y="135" width="881" height="1" fill="#1f8a1f"/><g clip-path="url(#mainc)"><rect x="14" y="236" width="1" height="9" fill="#ec8c48"/><rect x="13" y="239" width="3" height="4" fill="#f29b55"/><rect x="14" y="240" width="1" height="2" fill="#f8b272"/><rect x="19" y="240" width="1" height="11" fill="#ec8c48"/><rect x="18" y="241" width="3" height="6" fill="#f29b55"/><rect x="19" y="242" width="1" height="4" fill="#7e3414"/><rect x="24" y="233" width="1" height="17" fill="#ec8c48"/><rect x="23" y="234" width="3" height="11" fill="#f29b55"/><rect x="24" y="235" width="1" height="9" fill="#f8b272"/><rect x="29" y="221" width="1" height="17" fill="#ec8c48"/><rect x="28" y="224" width="3" height="11" fill="#f29b55"/><rect x="29" y="225" width="1" height="9" fill="#f8b272"/><rect x="34" y="207" width="1" height="21" fill="#ec8c48"/><rect x="33" y="215" width="3" height="9" fill="#f29b55"/><rect x="34" y="216" width="1" height="7" fill="#f8b272"/><rect x="39" y="211" width="1" height="13" fill="#ec8c48"/><rect x="38" y="214" width="3" height="9" fill="#f29b55"/><rect x="39" y="215" width="1" height="7" fill="#7e3414"/><rect x="44" y="213" width="1" height="11" fill="#ec8c48"/><rect x="43" y="216" width="3" height="6" fill="#f29b55"/><rect x="44" y="217" width="1" height="4" fill="#f8b272"/><rect x="49" y="213" width="1" height="8" fill="#ec8c48"/><rect x="48" y="215" width="3" height="4" fill="#f29b55"/><rect x="49" y="216" width="1" height="2" fill="#7e3414"/><rect x="54" y="207" width="1" height="15" fill="#ec8c48"/><rect x="53" y="215" width="3" height="2" fill="#f29b55"/><rect x="59" y="211" width="1" height="12" fill="#ec8c48"/><rect x="58" y="214" width="3" height="4" fill="#f29b55"/><rect x="59" y="215" width="1" height="2" fill="#7e3414"/><rect x="64" y="209" width="1" height="14" fill="#ec8c48"/><rect x="63" y="213" width="3" height="4" fill="#f29b55"/><rect x="64" y="214" width="1" height="2" fill="#f8b272"/><rect x="69" y="206" width="1" height="10" fill="#ec8c48"/><rect x="68" y="209" width="3" height="2" fill="#f29b55"/><rect x="74" y="207" width="1" height="9" fill="#ec8c48"/><rect x="73" y="210" width="3" height="4" fill="#f29b55"/><rect x="74" y="211" width="1" height="2" fill="#f8b272"/><rect x="79" y="206" width="1" height="10" fill="#ec8c48"/><rect x="78" y="211" width="3" height="3" fill="#f29b55"/><rect x="79" y="212" width="1" height="1" fill="#f8b272"/><rect x="84" y="210" width="1" height="21" fill="#ec8c48"/><rect x="83" y="212" width="3" height="9" fill="#f29b55"/><rect x="84" y="213" width="1" height="7" fill="#7e3414"/><rect x="89" y="203" width="1" height="21" fill="#ec8c48"/><rect x="88" y="209" width="3" height="14" fill="#f29b55"/><rect x="89" y="210" width="1" height="12" fill="#f8b272"/><rect x="94" y="205" width="1" height="18" fill="#ec8c48"/><rect x="93" y="209" width="3" height="8" fill="#f29b55"/><rect x="94" y="210" width="1" height="6" fill="#7e3414"/><rect x="99" y="214" width="1" height="10" fill="#ec8c48"/><rect x="98" y="215" width="3" height="6" fill="#f29b55"/><rect x="99" y="216" width="1" height="4" fill="#7e3414"/><rect x="104" y="213" width="1" height="11" fill="#ec8c48"/><rect x="103" y="216" width="3" height="4" fill="#f29b55"/><rect x="104" y="217" width="1" height="2" fill="#f8b272"/><rect x="109" y="213" width="1" height="8" fill="#ec8c48"/><rect x="108" y="216" width="3" height="3" fill="#f29b55"/><rect x="109" y="217" width="1" height="1" fill="#f8b272"/><rect x="114" y="213" width="1" height="12" fill="#ec8c48"/><rect x="113" y="216" width="3" height="4" fill="#f29b55"/><rect x="114" y="217" width="1" height="2" fill="#f8b272"/><rect x="118" y="209" width="1" height="14" fill="#ec8c48"/><rect x="117" y="212" width="3" height="8" fill="#f29b55"/><rect x="118" y="213" width="1" height="6" fill="#f8b272"/><rect x="123" y="207" width="1" height="14" fill="#ec8c48"/><rect x="122" y="210" width="3" height="7" fill="#f29b55"/><rect x="123" y="211" width="1" height="5" fill="#7e3414"/><rect x="128" y="156" width="1" height="63" fill="#ec8c48"/><rect x="127" y="159" width="3" height="58" fill="#f29b55"/><rect x="128" y="160" width="1" height="56" fill="#f8b272"/><rect x="133" y="153" width="1" height="10" fill="#ec8c48"/><rect x="132" y="157" width="3" height="2" fill="#f29b55"/><rect x="138" y="155" width="1" height="13" fill="#ec8c48"/><rect x="137" y="156" width="3" height="4" fill="#f29b55"/><rect x="138" y="157" width="1" height="2" fill="#7e3414"/><rect x="143" y="125" width="1" height="40" fill="#ec8c48"/><rect x="142" y="130" width="3" height="30" fill="#f29b55"/><rect x="143" y="131" width="1" height="28" fill="#f8b272"/><rect x="148" y="116" width="1" height="19" fill="#ec8c48"/><rect x="147" y="121" width="3" height="8" fill="#f29b55"/><rect x="148" y="122" width="1" height="6" fill="#f8b272"/><rect x="153" y="98" width="1" height="35" fill="#ec8c48"/><rect x="152" y="101" width="3" height="19" fill="#f29b55"/><rect x="153" y="102" width="1" height="17" fill="#f8b272"/><rect x="158" y="99" width="1" height="16" fill="#ec8c48"/><rect x="157" y="100" width="3" height="8" fill="#f29b55"/><rect x="158" y="101" width="1" height="6" fill="#7e3414"/><rect x="163" y="99" width="1" height="13" fill="#ec8c48"/><rect x="162" y="104" width="3" height="3" fill="#f29b55"/><rect x="163" y="105" width="1" height="1" fill="#f8b272"/><rect x="168" y="100" width="1" height="14" fill="#ec8c48"/><rect x="167" y="102" width="3" height="6" fill="#f29b55"/><rect x="168" y="103" width="1" height="4" fill="#7e3414"/><rect x="173" y="94" width="1" height="17" fill="#ec8c48"/><rect x="172" y="101" width="3" height="6" fill="#f29b55"/><rect x="173" y="102" width="1" height="4" fill="#f8b272"/><rect x="178" y="80" width="1" height="27" fill="#ec8c48"/><rect x="177" y="91" width="3" height="10" fill="#f29b55"/><rect x="178" y="92" width="1" height="8" fill="#f8b272"/><rect x="183" y="72" width="1" height="21" fill="#ec8c48"/><rect x="182" y="84" width="3" height="7" fill="#f29b55"/><rect x="183" y="85" width="1" height="5" fill="#f8b272"/><rect x="188" y="68" width="1" height="21" fill="#ec8c48"/><rect x="187" y="71" width="3" height="12" fill="#f29b55"/><rect x="188" y="72" width="1" height="10" fill="#f8b272"/><rect x="193" y="75" width="1" height="10" fill="#ec8c48"/><rect x="192" y="75" width="3" height="6" fill="#f29b55"/><rect x="193" y="76" width="1" height="4" fill="#7e3414"/><rect x="198" y="71" width="1" height="14" fill="#ec8c48"/><rect x="197" y="77" width="3" height="3" fill="#f29b55"/><rect x="198" y="78" width="1" height="1" fill="#f8b272"/><rect x="203" y="69" width="1" height="21" fill="#ec8c48"/><rect x="202" y="76" width="3" height="11" fill="#f29b55"/><rect x="203" y="77" width="1" height="9" fill="#7e3414"/><rect x="208" y="81" width="1" height="10" fill="#ec8c48"/><rect x="207" y="85" width="3" height="2" fill="#f29b55"/><rect x="213" y="83" width="1" height="26" fill="#ec8c48"/><rect x="212" y="86" width="3" height="19" fill="#f29b55"/><rect x="213" y="87" width="1" height="17" fill="#7e3414"/><rect x="218" y="99" width="1" height="10" fill="#ec8c48"/><rect x="217" y="103" width="3" height="3" fill="#f29b55"/><rect x="218" y="104" width="1" height="1" fill="#f8b272"/><rect x="222" y="95" width="1" height="14" fill="#ec8c48"/><rect x="221" y="99" width="3" height="6" fill="#f29b55"/><rect x="222" y="100" width="1" height="4" fill="#f8b272"/><rect x="227" y="92" width="1" height="10" fill="#ec8c48"/><rect x="226" y="95" width="3" height="4" fill="#f29b55"/><rect x="227" y="96" width="1" height="2" fill="#f8b272"/><rect x="232" y="86" width="1" height="16" fill="#ec8c48"/><rect x="231" y="92" width="3" height="3" fill="#f29b55"/><rect x="232" y="93" width="1" height="1" fill="#f8b272"/><rect x="237" y="83" width="1" height="15" fill="#ec8c48"/><rect x="236" y="89" width="3" height="3" fill="#f29b55"/><rect x="237" y="90" width="1" height="1" fill="#f8b272"/><rect x="242" y="86" width="1" height="17" fill="#ec8c48"/><rect x="241" y="89" width="3" height="14" fill="#f29b55"/><rect x="242" y="90" width="1" height="12" fill="#7e3414"/><rect x="247" y="97" width="1" height="13" fill="#ec8c48"/><rect x="246" y="101" width="3" height="4" fill="#f29b55"/><rect x="247" y="102" width="1" height="2" fill="#7e3414"/><rect x="252" y="96" width="1" height="12" fill="#ec8c48"/><rect x="251" y="99" width="3" height="4" fill="#f29b55"/><rect x="252" y="100" width="1" height="2" fill="#f8b272"/><rect x="257" y="90" width="1" height="11" fill="#ec8c48"/><rect x="256" y="94" width="3" height="5" fill="#f29b55"/><rect x="257" y="95" width="1" height="3" fill="#f8b272"/><rect x="262" y="90" width="1" height="20" fill="#ec8c48"/><rect x="261" y="93" width="3" height="9" fill="#f29b55"/><rect x="262" y="94" width="1" height="7" fill="#7e3414"/><rect x="267" y="97" width="1" height="18" fill="#ec8c48"/><rect x="266" y="100" width="3" height="10" fill="#f29b55"/><rect x="267" y="101" width="1" height="8" fill="#7e3414"/><rect x="272" y="100" width="1" height="22" fill="#ec8c48"/><rect x="271" y="102" width="3" height="8" fill="#f29b55"/><rect x="272" y="103" width="1" height="6" fill="#f8b272"/><rect x="277" y="95" width="1" height="12" fill="#ec8c48"/><rect x="276" y="101" width="3" height="2" fill="#f29b55"/><rect x="282" y="97" width="1" height="11" fill="#ec8c48"/><rect x="287" y="93" width="1" height="10" fill="#ec8c48"/><rect x="286" y="97" width="3" height="6" fill="#f29b55"/><rect x="287" y="98" width="1" height="4" fill="#f8b272"/><rect x="292" y="91" width="1" height="16" fill="#ec8c48"/><rect x="291" y="94" width="3" height="3" fill="#f29b55"/><rect x="292" y="95" width="1" height="1" fill="#f8b272"/><rect x="297" y="91" width="1" height="18" fill="#ec8c48"/><rect x="296" y="92" width="3" height="15" fill="#f29b55"/><rect x="297" y="93" width="1" height="13" fill="#7e3414"/><rect x="302" y="93" width="1" height="16" fill="#ec8c48"/><rect x="301" y="102" width="3" height="3" fill="#f29b55"/><rect x="302" y="103" width="1" height="1" fill="#f8b272"/><rect x="307" y="99" width="1" height="9" fill="#ec8c48"/><rect x="306" y="100" width="3" height="5" fill="#f29b55"/><rect x="307" y="101" width="1" height="3" fill="#7e3414"/><rect x="312" y="100" width="1" height="8" fill="#ec8c48"/><rect x="311" y="103" width="3" height="3" fill="#f29b55"/><rect x="312" y="104" width="1" height="1" fill="#f8b272"/><rect x="317" y="102" width="1" height="9" fill="#ec8c48"/><rect x="316" y="106" width="3" height="3" fill="#f29b55"/><rect x="317" y="107" width="1" height="1" fill="#f8b272"/><rect x="322" y="101" width="1" height="12" fill="#ec8c48"/><rect x="321" y="106" width="3" height="7" fill="#f29b55"/><rect x="322" y="107" width="1" height="5" fill="#7e3414"/><rect x="326" y="105" width="1" height="17" fill="#ec8c48"/><rect x="325" y="111" width="3" height="4" fill="#f29b55"/><rect x="326" y="112" width="1" height="2" fill="#7e3414"/><rect x="331" y="103" width="1" height="25" fill="#ec8c48"/><rect x="330" y="108" width="3" height="7" fill="#f29b55"/><rect x="331" y="109" width="1" height="5" fill="#f8b272"/><rect x="336" y="101" width="1" height="14" fill="#ec8c48"/><rect x="335" y="107" width="3" height="8" fill="#f29b55"/><rect x="336" y="108" width="1" height="6" fill="#7e3414"/><rect x="341" y="106" width="1" height="8" fill="#ec8c48"/><rect x="340" y="109" width="3" height="2" fill="#f29b55"/><rect x="346" y="97" width="1" height="14" fill="#ec8c48"/><rect x="345" y="102" width="3" height="6" fill="#f29b55"/><rect x="346" y="103" width="1" height="4" fill="#f8b272"/><rect x="351" y="96" width="1" height="14" fill="#ec8c48"/><rect x="350" y="100" width="3" height="6" fill="#f29b55"/><rect x="351" y="101" width="1" height="4" fill="#7e3414"/><rect x="356" y="82" width="1" height="26" fill="#ec8c48"/><rect x="355" y="93" width="3" height="13" fill="#f29b55"/><rect x="356" y="94" width="1" height="11" fill="#f8b272"/><rect x="361" y="89" width="1" height="15" fill="#ec8c48"/><rect x="360" y="92" width="3" height="6" fill="#f29b55"/><rect x="361" y="93" width="1" height="4" fill="#7e3414"/><rect x="366" y="90" width="1" height="11" fill="#ec8c48"/><rect x="371" y="88" width="1" height="11" fill="#ec8c48"/><rect x="370" y="91" width="3" height="5" fill="#f29b55"/><rect x="371" y="92" width="1" height="3" fill="#f8b272"/><rect x="376" y="87" width="1" height="10" fill="#ec8c48"/><rect x="375" y="90" width="3" height="2" fill="#f29b55"/><rect x="381" y="84" width="1" height="17" fill="#ec8c48"/><rect x="380" y="87" width="3" height="4" fill="#f29b55"/><rect x="381" y="88" width="1" height="2" fill="#f8b272"/><rect x="386" y="72" width="1" height="23" fill="#ec8c48"/><rect x="385" y="77" width="3" height="17" fill="#f29b55"/><rect x="386" y="78" width="1" height="15" fill="#f8b272"/><rect x="391" y="71" width="1" height="24" fill="#ec8c48"/><rect x="390" y="76" width="3" height="13" fill="#f29b55"/><rect x="391" y="77" width="1" height="11" fill="#7e3414"/><rect x="396" y="82" width="1" height="10" fill="#ec8c48"/><rect x="395" y="84" width="3" height="4" fill="#f29b55"/><rect x="396" y="85" width="1" height="2" fill="#f8b272"/><rect x="401" y="82" width="1" height="9" fill="#ec8c48"/><rect x="400" y="84" width="3" height="3" fill="#f29b55"/><rect x="401" y="85" width="1" height="1" fill="#f8b272"/><rect x="406" y="82" width="1" height="9" fill="#ec8c48"/><rect x="405" y="84" width="3" height="3" fill="#f29b55"/><rect x="406" y="85" width="1" height="1" fill="#f8b272"/><rect x="411" y="72" width="1" height="18" fill="#ec8c48"/><rect x="410" y="76" width="3" height="8" fill="#f29b55"/><rect x="411" y="77" width="1" height="6" fill="#f8b272"/><rect x="416" y="64" width="1" height="19" fill="#ec8c48"/><rect x="415" y="70" width="3" height="6" fill="#f29b55"/><rect x="416" y="71" width="1" height="4" fill="#f8b272"/><rect x="421" y="56" width="1" height="18" fill="#ec8c48"/><rect x="420" y="61" width="3" height="8" fill="#f29b55"/><rect x="421" y="62" width="1" height="6" fill="#f8b272"/><rect x="426" y="54" width="1" height="13" fill="#ec8c48"/><rect x="425" y="60" width="3" height="4" fill="#f29b55"/><rect x="426" y="61" width="1" height="2" fill="#7e3414"/><rect x="430" y="55" width="1" height="12" fill="#ec8c48"/><rect x="429" y="59" width="3" height="4" fill="#f29b55"/><rect x="430" y="60" width="1" height="2" fill="#f8b272"/><rect x="435" y="55" width="1" height="8" fill="#ec8c48"/><rect x="434" y="58" width="3" height="2" fill="#f29b55"/><rect x="440" y="49" width="1" height="18" fill="#ec8c48"/><rect x="439" y="55" width="3" height="3" fill="#f29b55"/><rect x="440" y="56" width="1" height="1" fill="#f8b272"/><rect x="445" y="49" width="1" height="22" fill="#ec8c48"/><rect x="444" y="53" width="3" height="15" fill="#f29b55"/><rect x="445" y="54" width="1" height="13" fill="#7e3414"/><rect x="450" y="55" width="1" height="19" fill="#ec8c48"/><rect x="449" y="59" width="3" height="9" fill="#f29b55"/><rect x="450" y="60" width="1" height="7" fill="#f8b272"/><rect x="455" y="53" width="1" height="11" fill="#ec8c48"/><rect x="454" y="58" width="3" height="2" fill="#f29b55"/><rect x="460" y="54" width="1" height="11" fill="#ec8c48"/><rect x="459" y="58" width="3" height="2" fill="#f29b55"/><rect x="465" y="53" width="1" height="9" fill="#ec8c48"/><rect x="470" y="47" width="1" height="15" fill="#ec8c48"/><rect x="469" y="56" width="3" height="2" fill="#f29b55"/><rect x="475" y="48" width="1" height="30" fill="#ec8c48"/><rect x="474" y="57" width="3" height="14" fill="#f29b55"/><rect x="475" y="58" width="1" height="12" fill="#7e3414"/><rect x="480" y="56" width="1" height="26" fill="#ec8c48"/><rect x="479" y="72" width="3" height="7" fill="#f29b55"/><rect x="480" y="73" width="1" height="5" fill="#7e3414"/><rect x="485" y="74" width="1" height="19" fill="#ec8c48"/><rect x="484" y="77" width="3" height="16" fill="#f29b55"/><rect x="485" y="78" width="1" height="14" fill="#7e3414"/><rect x="490" y="77" width="1" height="12" fill="#ec8c48"/><rect x="489" y="81" width="3" height="8" fill="#f29b55"/><rect x="490" y="82" width="1" height="6" fill="#f8b272"/><rect x="495" y="75" width="1" height="11" fill="#ec8c48"/><rect x="500" y="72" width="1" height="13" fill="#ec8c48"/><rect x="499" y="79" width="3" height="4" fill="#f29b55"/><rect x="500" y="80" width="1" height="2" fill="#7e3414"/><rect x="505" y="78" width="1" height="14" fill="#ec8c48"/><rect x="504" y="82" width="3" height="2" fill="#f29b55"/><rect x="510" y="73" width="1" height="13" fill="#ec8c48"/><rect x="509" y="81" width="3" height="2" fill="#f29b55"/><rect x="515" y="75" width="1" height="9" fill="#ec8c48"/><rect x="514" y="78" width="3" height="2" fill="#f29b55"/><rect x="520" y="75" width="1" height="9" fill="#ec8c48"/><rect x="519" y="79" width="3" height="2" fill="#f29b55"/><rect x="525" y="78" width="1" height="14" fill="#ec8c48"/><rect x="524" y="80" width="3" height="8" fill="#f29b55"/><rect x="525" y="81" width="1" height="6" fill="#7e3414"/><rect x="530" y="71" width="1" height="27" fill="#ec8c48"/><rect x="529" y="72" width="3" height="15" fill="#f29b55"/><rect x="530" y="73" width="1" height="13" fill="#f8b272"/><rect x="534" y="64" width="1" height="17" fill="#ec8c48"/><rect x="533" y="71" width="3" height="2" fill="#f29b55"/><rect x="539" y="61" width="1" height="17" fill="#ec8c48"/><rect x="538" y="64" width="3" height="7" fill="#f29b55"/><rect x="539" y="65" width="1" height="5" fill="#f8b272"/><rect x="544" y="61" width="1" height="10" fill="#ec8c48"/><rect x="543" y="63" width="3" height="5" fill="#f29b55"/><rect x="544" y="64" width="1" height="3" fill="#7e3414"/><rect x="549" y="61" width="1" height="10" fill="#ec8c48"/><rect x="548" y="66" width="3" height="2" fill="#f29b55"/><rect x="554" y="62" width="1" height="11" fill="#ec8c48"/><rect x="553" y="66" width="3" height="4" fill="#f29b55"/><rect x="554" y="67" width="1" height="2" fill="#7e3414"/><rect x="559" y="63" width="1" height="17" fill="#ec8c48"/><rect x="558" y="69" width="3" height="3" fill="#f29b55"/><rect x="559" y="70" width="1" height="1" fill="#f8b272"/><rect x="564" y="66" width="1" height="15" fill="#ec8c48"/><rect x="563" y="71" width="3" height="3" fill="#f29b55"/><rect x="564" y="72" width="1" height="1" fill="#f8b272"/><rect x="569" y="51" width="1" height="20" fill="#ec8c48"/><rect x="568" y="60" width="3" height="10" fill="#f29b55"/><rect x="569" y="61" width="1" height="8" fill="#f8b272"/><rect x="574" y="56" width="1" height="15" fill="#ec8c48"/><rect x="573" y="58" width="3" height="2" fill="#f29b55"/><rect x="579" y="55" width="1" height="11" fill="#ec8c48"/><rect x="584" y="55" width="1" height="10" fill="#ec8c48"/><rect x="583" y="58" width="3" height="5" fill="#f29b55"/><rect x="584" y="59" width="1" height="3" fill="#7e3414"/><rect x="589" y="59" width="1" height="50" fill="#ec8c48"/><rect x="588" y="60" width="3" height="48" fill="#f29b55"/><rect x="589" y="61" width="1" height="46" fill="#7e3414"/><rect x="594" y="102" width="1" height="18" fill="#ec8c48"/><rect x="593" y="106" width="3" height="10" fill="#f29b55"/><rect x="594" y="107" width="1" height="8" fill="#7e3414"/><rect x="599" y="112" width="1" height="21" fill="#ec8c48"/><rect x="598" y="113" width="3" height="8" fill="#f29b55"/><rect x="599" y="114" width="1" height="6" fill="#7e3414"/><rect x="604" y="111" width="1" height="15" fill="#ec8c48"/><rect x="603" y="119" width="3" height="4" fill="#f29b55"/><rect x="604" y="120" width="1" height="2" fill="#7e3414"/><rect x="609" y="115" width="1" height="13" fill="#ec8c48"/><rect x="608" y="120" width="3" height="3" fill="#f29b55"/><rect x="609" y="121" width="1" height="1" fill="#f8b272"/><rect x="614" y="115" width="1" height="10" fill="#ec8c48"/><rect x="613" y="118" width="3" height="2" fill="#f29b55"/><rect x="619" y="106" width="1" height="20" fill="#ec8c48"/><rect x="618" y="117" width="3" height="2" fill="#f29b55"/><rect x="624" y="114" width="1" height="14" fill="#ec8c48"/><rect x="623" y="117" width="3" height="9" fill="#f29b55"/><rect x="624" y="118" width="1" height="7" fill="#7e3414"/><rect x="629" y="113" width="1" height="15" fill="#ec8c48"/><rect x="628" y="122" width="3" height="2" fill="#f29b55"/><rect x="634" y="120" width="1" height="12" fill="#ec8c48"/><rect x="633" y="122" width="3" height="9" fill="#f29b55"/><rect x="634" y="123" width="1" height="7" fill="#7e3414"/><rect x="638" y="124" width="1" height="8" fill="#ec8c48"/><rect x="637" y="126" width="3" height="3" fill="#f29b55"/><rect x="638" y="127" width="1" height="1" fill="#f8b272"/><rect x="643" y="121" width="1" height="12" fill="#ec8c48"/><rect x="642" y="125" width="3" height="4" fill="#f29b55"/><rect x="643" y="126" width="1" height="2" fill="#f8b272"/><rect x="648" y="116" width="1" height="18" fill="#ec8c48"/><rect x="647" y="122" width="3" height="3" fill="#f29b55"/><rect x="648" y="123" width="1" height="1" fill="#f8b272"/><rect x="653" y="107" width="1" height="23" fill="#ec8c48"/><rect x="652" y="121" width="3" height="4" fill="#f29b55"/><rect x="653" y="122" width="1" height="2" fill="#f8b272"/><rect x="658" y="113" width="1" height="15" fill="#ec8c48"/><rect x="657" y="118" width="3" height="2" fill="#f29b55"/><rect x="663" y="115" width="1" height="10" fill="#ec8c48"/><rect x="662" y="118" width="3" height="5" fill="#f29b55"/><rect x="663" y="119" width="1" height="3" fill="#7e3414"/><rect x="668" y="117" width="1" height="10" fill="#ec8c48"/><rect x="667" y="121" width="3" height="5" fill="#f29b55"/><rect x="668" y="122" width="1" height="3" fill="#7e3414"/><rect x="673" y="121" width="1" height="8" fill="#ec8c48"/><rect x="672" y="122" width="3" height="3" fill="#f29b55"/><rect x="673" y="123" width="1" height="1" fill="#f8b272"/><rect x="678" y="114" width="1" height="12" fill="#ec8c48"/><rect x="677" y="119" width="3" height="4" fill="#f29b55"/><rect x="678" y="120" width="1" height="2" fill="#f8b272"/><rect x="683" y="90" width="1" height="30" fill="#ec8c48"/><rect x="682" y="94" width="3" height="26" fill="#f29b55"/><rect x="683" y="95" width="1" height="24" fill="#f8b272"/><rect x="688" y="90" width="1" height="29" fill="#ec8c48"/><rect x="687" y="94" width="3" height="16" fill="#f29b55"/><rect x="688" y="95" width="1" height="14" fill="#7e3414"/><rect x="693" y="96" width="1" height="15" fill="#ec8c48"/><rect x="692" y="101" width="3" height="8" fill="#f29b55"/><rect x="693" y="102" width="1" height="6" fill="#f8b272"/><rect x="698" y="94" width="1" height="12" fill="#ec8c48"/><rect x="697" y="100" width="3" height="2" fill="#f29b55"/><rect x="703" y="97" width="1" height="10" fill="#ec8c48"/><rect x="702" y="99" width="3" height="4" fill="#f29b55"/><rect x="703" y="100" width="1" height="2" fill="#7e3414"/><rect x="708" y="95" width="1" height="15" fill="#ec8c48"/><rect x="707" y="99" width="3" height="3" fill="#f29b55"/><rect x="708" y="100" width="1" height="1" fill="#f8b272"/><rect x="713" y="93" width="1" height="23" fill="#ec8c48"/><rect x="712" y="98" width="3" height="14" fill="#f29b55"/><rect x="713" y="99" width="1" height="12" fill="#7e3414"/><rect x="718" y="106" width="1" height="22" fill="#ec8c48"/><rect x="717" y="111" width="3" height="15" fill="#f29b55"/><rect x="718" y="112" width="1" height="13" fill="#7e3414"/><rect x="723" y="118" width="1" height="10" fill="#ec8c48"/><rect x="722" y="124" width="3" height="2" fill="#f29b55"/><rect x="728" y="116" width="1" height="12" fill="#ec8c48"/><rect x="727" y="125" width="3" height="2" fill="#f29b55"/><rect x="733" y="117" width="1" height="11" fill="#ec8c48"/><rect x="737" y="121" width="1" height="22" fill="#ec8c48"/><rect x="736" y="124" width="3" height="14" fill="#f29b55"/><rect x="737" y="125" width="1" height="12" fill="#7e3414"/><rect x="742" y="102" width="1" height="39" fill="#ec8c48"/><rect x="741" y="105" width="3" height="32" fill="#f29b55"/><rect x="742" y="106" width="1" height="30" fill="#f8b272"/><rect x="747" y="96" width="1" height="18" fill="#ec8c48"/><rect x="746" y="99" width="3" height="7" fill="#f29b55"/><rect x="747" y="100" width="1" height="5" fill="#f8b272"/><rect x="752" y="95" width="1" height="14" fill="#ec8c48"/><rect x="751" y="98" width="3" height="9" fill="#f29b55"/><rect x="752" y="99" width="1" height="7" fill="#7e3414"/><rect x="757" y="100" width="1" height="12" fill="#ec8c48"/><rect x="756" y="104" width="3" height="3" fill="#f29b55"/><rect x="757" y="105" width="1" height="1" fill="#f8b272"/><rect x="762" y="97" width="1" height="9" fill="#ec8c48"/><rect x="761" y="101" width="3" height="2" fill="#f29b55"/><rect x="767" y="89" width="1" height="17" fill="#ec8c48"/><rect x="766" y="98" width="3" height="3" fill="#f29b55"/><rect x="767" y="99" width="1" height="1" fill="#f8b272"/><rect x="772" y="89" width="1" height="14" fill="#ec8c48"/><rect x="771" y="93" width="3" height="4" fill="#f29b55"/><rect x="772" y="94" width="1" height="2" fill="#f8b272"/><rect x="777" y="89" width="1" height="14" fill="#ec8c48"/><rect x="776" y="93" width="3" height="5" fill="#f29b55"/><rect x="777" y="94" width="1" height="3" fill="#7e3414"/><rect x="782" y="92" width="1" height="10" fill="#ec8c48"/><rect x="781" y="94" width="3" height="2" fill="#f29b55"/><rect x="787" y="93" width="1" height="10" fill="#ec8c48"/><rect x="786" y="94" width="3" height="4" fill="#f29b55"/><rect x="787" y="95" width="1" height="2" fill="#7e3414"/><rect x="792" y="93" width="1" height="8" fill="#ec8c48"/><rect x="791" y="97" width="3" height="2" fill="#f29b55"/><rect x="797" y="81" width="1" height="20" fill="#ec8c48"/><rect x="796" y="86" width="3" height="12" fill="#f29b55"/><rect x="797" y="87" width="1" height="10" fill="#f8b272"/><rect x="802" y="78" width="1" height="24" fill="#ec8c48"/><rect x="801" y="84" width="3" height="17" fill="#f29b55"/><rect x="802" y="85" width="1" height="15" fill="#7e3414"/><rect x="807" y="96" width="1" height="20" fill="#ec8c48"/><rect x="806" y="98" width="3" height="8" fill="#f29b55"/><rect x="807" y="99" width="1" height="6" fill="#7e3414"/><rect x="812" y="100" width="1" height="9" fill="#ec8c48"/><rect x="817" y="97" width="1" height="15" fill="#ec8c48"/><rect x="816" y="102" width="3" height="3" fill="#f29b55"/><rect x="817" y="103" width="1" height="1" fill="#f8b272"/><rect x="822" y="97" width="1" height="11" fill="#ec8c48"/><rect x="821" y="101" width="3" height="2" fill="#f29b55"/><rect x="827" y="93" width="1" height="12" fill="#ec8c48"/><rect x="826" y="101" width="3" height="2" fill="#f29b55"/><rect x="832" y="80" width="1" height="31" fill="#ec8c48"/><rect x="831" y="88" width="3" height="14" fill="#f29b55"/><rect x="832" y="89" width="1" height="12" fill="#f8b272"/><rect x="837" y="72" width="1" height="19" fill="#ec8c48"/><rect x="836" y="84" width="3" height="3" fill="#f29b55"/><rect x="837" y="85" width="1" height="1" fill="#f8b272"/><rect x="841" y="78" width="1" height="11" fill="#ec8c48"/><rect x="840" y="82" width="3" height="3" fill="#f29b55"/><rect x="841" y="83" width="1" height="1" fill="#f8b272"/><rect x="846" y="80" width="1" height="9" fill="#ec8c48"/><rect x="845" y="83" width="3" height="2" fill="#f29b55"/><rect x="851" y="79" width="1" height="10" fill="#ec8c48"/><rect x="850" y="84" width="3" height="2" fill="#f29b55"/><rect x="856" y="72" width="1" height="19" fill="#ec8c48"/><rect x="855" y="84" width="3" height="3" fill="#f29b55"/><rect x="856" y="85" width="1" height="1" fill="#f8b272"/><rect x="861" y="77" width="1" height="12" fill="#ec8c48"/></g><rect x="15" y="85" width="881" height="1" fill="#e8e8e8"/><polyline clip-path="url(#mainc)" points="14.0,222.4 65.0,222.4 77.0,221.3 123.0,221.3 130.0,217.2 144.8,209.1 163.3,195.6 179.4,185.7 191.7,175.8 204.0,167.2 216.4,161.6 228.8,156.0 241.0,151.7 250.0,148.0 286.0,136.8 300.0,133.0 316.0,130.5 330.0,129.0 350.0,127.0 360.0,124.0 385.0,117.0 410.7,110.0 430.6,105.0 448.4,99.2 460.0,96.6 468.0,93.4 485.0,91.3 516.0,89.7 535.0,87.6 552.0,86.6 562.5,85.0 573.0,82.4 581.0,81.3 588.0,80.3 596.0,82.6 605.6,86.8 621.0,91.0 637.5,95.0 651.4,97.2 665.3,99.3 668.0,100.7 715.0,101.0 721.0,102.4 736.3,105.8 743.0,105.8 751.6,104.4 779.0,104.4 786.3,103.0 790.0,102.6 829.0,102.6 834.4,101.2 853.9,100.7 855.0,98.9 861.0,98.9" fill="none" stroke="#b02830" stroke-width="1.6" shape-rendering="geometricPrecision"/><polyline clip-path="url(#mainc)" points="14.0,230.5 20.0,232.7 31.0,230.5 44.0,228.3 55.0,226.2 66.0,224.0 77.0,222.4 83.0,220.8 102.0,218.6 123.0,218.6 130.0,211.6 188.0,140.0 192.0,135.0 200.0,126.5 208.0,120.0 217.0,116.0 233.0,111.0 252.0,108.5 255.0,107.0 283.0,106.7 290.0,105.2 302.0,105.2 305.0,103.0 316.0,104.0 340.0,104.0 345.0,106.2 353.0,106.2 356.0,104.0 364.5,102.9 380.0,100.2 388.6,96.6 403.0,95.0 408.6,93.4 423.0,86.6 429.6,84.0 441.0,78.2 454.7,74.0 463.0,71.4 468.0,70.3 478.0,73.0 498.0,74.0 505.0,75.5 520.0,76.4 535.0,76.4 545.0,75.0 552.0,75.0 560.0,72.4 572.0,72.4 575.0,70.9 582.0,68.8 589.0,71.5 596.0,77.0 605.6,84.7 618.0,93.0 629.0,99.3 639.0,103.5 650.0,107.0 662.5,110.0 668.0,112.5 679.0,113.2 684.8,111.0 693.0,109.7 702.0,108.3 718.0,108.6 724.0,111.4 737.7,115.6 743.0,114.0 755.7,111.4 764.0,110.0 773.8,107.2 786.0,105.0 800.0,103.0 829.0,102.6 830.0,100.7 836.0,98.9 845.5,97.0 855.0,94.7 861.0,94.3" fill="none" stroke="#1414c8" stroke-width="1.25" shape-rendering="geometricPrecision"/><line x1="897" y1="63.5" x2="901" y2="63.5" stroke="#a6b6c7"/><line x1="897" y1="93.5" x2="901" y2="93.5" stroke="#a6b6c7"/><line x1="897" y1="122.5" x2="901" y2="122.5" stroke="#a6b6c7"/><line x1="897" y1="151.5" x2="901" y2="151.5" stroke="#a6b6c7"/><line x1="897" y1="180.5" x2="901" y2="180.5" stroke="#a6b6c7"/><line x1="897" y1="209.5" x2="901" y2="209.5" stroke="#a6b6c7"/><line x1="897" y1="239.5" x2="901" y2="239.5" stroke="#a6b6c7"/><line x1="897" y1="289.5" x2="901" y2="289.5" stroke="#a6b6c7"/><line x1="897" y1="322.5" x2="901" y2="322.5" stroke="#a6b6c7"/><line x1="897" y1="378.5" x2="901" y2="378.5" stroke="#a6b6c7"/><line x1="44.5" y1="402" x2="44.5" y2="406" stroke="#a6b6c7"/><line x1="74.5" y1="402" x2="74.5" y2="406" stroke="#a6b6c7"/><line x1="104.5" y1="402" x2="104.5" y2="406" stroke="#a6b6c7"/><line x1="133.5" y1="402" x2="133.5" y2="406" stroke="#a6b6c7"/><line x1="163.5" y1="402" x2="163.5" y2="406" stroke="#a6b6c7"/><line x1="193.5" y1="402" x2="193.5" y2="406" stroke="#a6b6c7"/><line x1="222.5" y1="402" x2="222.5" y2="406" stroke="#a6b6c7"/><line x1="252.5" y1="402" x2="252.5" y2="406" stroke="#a6b6c7"/><line x1="282.5" y1="402" x2="282.5" y2="406" stroke="#a6b6c7"/><line x1="311.5" y1="402" x2="311.5" y2="406" stroke="#a6b6c7"/><line x1="341.5" y1="402" x2="341.5" y2="406" stroke="#a6b6c7"/><line x1="371.5" y1="402" x2="371.5" y2="406" stroke="#a6b6c7"/><line x1="401.5" y1="402" x2="401.5" y2="406" stroke="#a6b6c7"/><line x1="430.5" y1="402" x2="430.5" y2="406" stroke="#a6b6c7"/><line x1="460.5" y1="402" x2="460.5" y2="406" stroke="#a6b6c7"/><line x1="490.5" y1="402" x2="490.5" y2="406" stroke="#a6b6c7"/><line x1="519.5" y1="402" x2="519.5" y2="406" stroke="#a6b6c7"/><line x1="549.5" y1="402" x2="549.5" y2="406" stroke="#a6b6c7"/><line x1="579.5" y1="402" x2="579.5" y2="406" stroke="#a6b6c7"/><line x1="609.5" y1="402" x2="609.5" y2="406" stroke="#a6b6c7"/><line x1="638.5" y1="402" x2="638.5" y2="406" stroke="#a6b6c7"/><line x1="668.5" y1="402" x2="668.5" y2="406" stroke="#a6b6c7"/><line x1="698.5" y1="402" x2="698.5" y2="406" stroke="#a6b6c7"/><line x1="727.5" y1="402" x2="727.5" y2="406" stroke="#a6b6c7"/><line x1="757.5" y1="402" x2="757.5" y2="406" stroke="#a6b6c7"/><line x1="787.5" y1="402" x2="787.5" y2="406" stroke="#a6b6c7"/><line x1="817.5" y1="402" x2="817.5" y2="406" stroke="#a6b6c7"/><line x1="846.5" y1="402" x2="846.5" y2="406" stroke="#a6b6c7"/><line x1="876.5" y1="402" x2="876.5" y2="406" stroke="#a6b6c7"/><rect x="14" y="39" width="31" height="22" fill="#f7f7f7"/><rect x="14" y="40" width="31" height="4" fill="#d4d4d4"/><rect x="18.5" y="47.5" width="9" height="9" rx="2" fill="#e23a42" stroke="#a01820" stroke-width="1" shape-rendering="geometricPrecision"/><rect x="31.5" y="47.5" width="9" height="9" rx="2" fill="#2a9ed8" stroke="#18608e" stroke-width="1" shape-rendering="geometricPrecision"/><rect x="14.5" y="379.5" width="70" height="18.5" rx="2" fill="#5b6b80" stroke="#b4c4d2" stroke-width="1" shape-rendering="geometricPrecision"/><rect x="14" y="379" width="2" height="27" fill="#c4e6de"/><rect x="430.5" y="379.5" width="69" height="18.5" rx="2" fill="#5b6b80" stroke="#b4c4d2" stroke-width="1" shape-rendering="geometricPrecision"/><rect x="430" y="379" width="2" height="27" fill="#c4e6de"/><rect x="896" y="75" width="48" height="21" fill="#ffffff"/>
</svg>
<div style="position:absolute;left:45px;top:40px;width:246px;height:12px;background:#3b4049"></div>
<div class="lg" style="left:14.5px;color:#1616cc;font-size:10.3px">Exponential_Moving_Average</div>
<div class="lg" style="left:153.5px;color:#c81e22;font-size:10.3px">Exponential_Moving_Average</div>
<svg style="left:14px;top:39px" width="31" height="22" viewBox="14 39 31 22">
<rect x="14" y="39" width="31" height="22" fill="#f7f7f7"/><rect x="14" y="40" width="31" height="4" fill="#d4d4d4"/>
<defs><linearGradient id="lgr" x1="0" y1="0" x2="0" y2="1"><stop offset="0" stop-color="#f06068"/><stop offset="1" stop-color="#d42a32"/></linearGradient>
<linearGradient id="lgb" x1="0" y1="0" x2="0" y2="1"><stop offset="0" stop-color="#50c0f0"/><stop offset="1" stop-color="#1e88c4"/></linearGradient></defs>
<rect x="18.5" y="47.5" width="9" height="9" rx="2" fill="url(#lgr)" stroke="#a01820" stroke-width="1"/>
<rect x="31.5" y="47.5" width="9" height="9" rx="2" fill="url(#lgb)" stroke="#18608e" stroke-width="1"/>
</svg>
<div style="position:absolute;left:15px;top:270px;width:32px;height:13px;background:#3b4049"></div><div class="lg" style="left:16.5px;top:273px;color:#15157a;font-size:10px;letter-spacing:0.1px">MACD</div>
<div class="lg" style="left:16px;top:348px;color:#e88a3c;font-size:10px">RSI</div>
<div class="cb" style="left:22px">Июнь 2021</div>
<div class="cb" style="left:438px">Июль 2021</div>
<div class="pl" style="top:79px;left:904px;color:#3a3a3a">0.9213</div>
<div class="pl" style="top:60px">0.9250</div><div class="pl" style="top:90px">0.9200</div><div class="pl" style="top:119px">0.9150</div><div class="pl" style="top:148px">0.9100</div><div class="pl" style="top:177px">0.9050</div><div class="pl" style="top:206px">0.9000</div><div class="pl" style="top:236px">0.8950</div><div class="pl" style="top:287px;left:904px;letter-spacing:0.5px">+0.005</div><div class="pl" style="top:320px;left:904px;letter-spacing:0.5px">+0.000</div><div class="pl" style="top:375px">50</div><div class="tl" style="left:24px">14</div><div class="tl" style="left:54px">15</div><div class="tl" style="left:84px">16</div><div class="tl" style="left:113px">17</div><div class="tl" style="left:143px">18</div><div class="tl" style="left:173px">21</div><div class="tl" style="left:202px">22</div><div class="tl" style="left:232px">23</div><div class="tl" style="left:262px">24</div><div class="tl" style="left:291px">25</div><div class="tl" style="left:321px">28</div><div class="tl" style="left:351px">29</div><div class="tl" style="left:381px">30</div><div class="tl" style="left:410px">1</div><div class="tl" style="left:440px">2</div><div class="tl" style="left:470px">5</div><div class="tl" style="left:499px">6</div><div class="tl" style="left:529px">7</div><div class="tl" style="left:559px">8</div><div class="tl" style="left:589px">9</div><div class="tl" style="left:618px">12</div><div class="tl" style="left:648px">13</div><div class="tl" style="left:678px">14</div><div class="tl" style="left:707px">15</div><div class="tl" style="left:737px">16</div><div class="tl" style="left:767px">19</div><div class="tl" style="left:797px">20</div><div class="tl" style="left:826px">21</div><div class="tl" style="left:856px">22</div>
</body></html>
